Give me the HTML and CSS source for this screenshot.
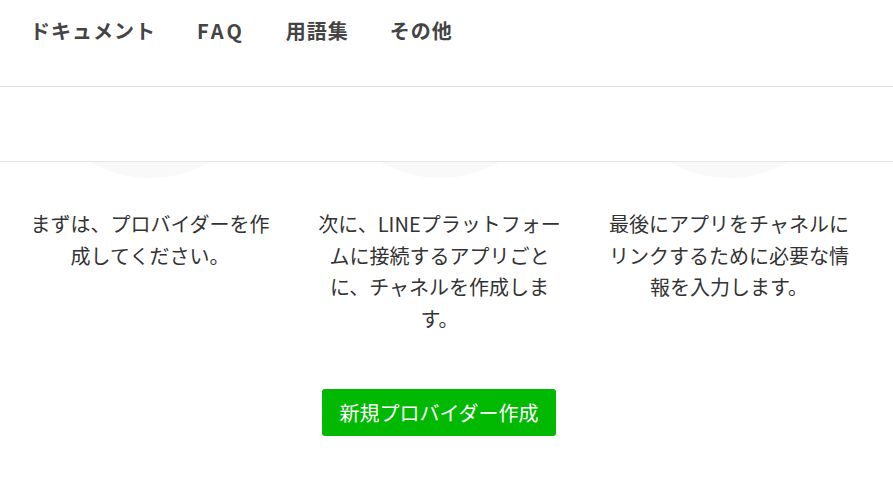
FILE: index.html
```html
<!DOCTYPE html>
<html lang="ja">
<head>
<meta charset="utf-8">
<title>プロバイダー</title>
<link rel="stylesheet" href="styles.css">
</head>
<body>
<header class="site-header">
  <nav class="nav">
    <a class="nav-item" href="#">ドキュメント</a>
    <a class="nav-item nav-item-latin" href="#">FAQ</a>
    <a class="nav-item" href="#">用語集</a>
    <a class="nav-item" href="#">その他</a>
  </nav>
  <div class="subbar"></div>
</header>
<main class="main">
  <section class="steps">
    <div class="step">
      <div class="step-visual"><div class="step-circle"></div></div>
      <p class="step-text">まずは、プロバイダーを作成してください。</p>
    </div>
    <div class="step">
      <div class="step-visual"><div class="step-circle"></div></div>
      <p class="step-text">次に、LINEプラットフォームに接続するアプリごとに、チャネルを作成します。</p>
    </div>
    <div class="step">
      <div class="step-visual"><div class="step-circle"></div></div>
      <p class="step-text">最後にアプリをチャネルにリンクするために必要な情報を入力します。</p>
    </div>
  </section>
  <div class="actions">
    <a class="btn-primary" href="#">新規プロバイダー作成</a>
  </div>
</main>
</body>
</html>
```
FILE: styles.css
```css
html, body {
  margin: 0;
  padding: 0;
  background: #fff;
}
body {
  font-family: "Noto Sans CJK JP", "Noto Sans", sans-serif;
  color: #333;
}
.site-header {
  position: fixed;
  top: 0;
  left: 0;
  right: 0;
  z-index: 10;
  background: #fff;
}
.nav {
  height: 87px;
  box-sizing: border-box;
  padding: 16px 0 0 30px;
  display: flex;
  align-items: flex-start;
  gap: 41px;
  border-bottom: 1px solid #e3e3e3;
}
.nav-item {
  font-size: 20px;
  line-height: 30px;
  font-weight: 700;
  letter-spacing: 1px;
  color: #444;
  text-decoration: none;
}
.nav-item-latin {
  letter-spacing: 3px;
}
.subbar {
  height: 74px;
  border-bottom: 1px solid #e6e6e6;
  background: #fff;
}
.main {
  padding: 0;
}
.steps {
  display: grid;
  grid-template-columns: repeat(3, 250px);
  column-gap: 39.5px;
  padding-left: 25px;
}
.step {
  display: flex;
  flex-direction: column;
  align-items: center;
}
.step-visual {
  height: 178px;
  width: 100%;
  overflow: hidden;
  display: flex;
  justify-content: center;
  align-items: flex-end;
}
.step-circle {
  flex: none;
  width: 240px;
  height: 240px;
  border-radius: 50%;
  background: #f9f9f9;
}
.step-text {
  margin: 30px 0 0;
  font-size: 20px;
  line-height: 31.5px;
  text-align: center;
  color: #333;
}
.actions {
  display: flex;
  justify-content: center;
  padding: 55px 0 0;
  padding-right: 15px;
}
.btn-primary {
  display: block;
  width: 234px;
  height: 47px;
  box-sizing: border-box;
  background: #00b900;
  color: #fff;
  border-radius: 3px;
  text-decoration: none;
  font-size: 20px;
  line-height: 47px;
  text-align: center;
}
```
